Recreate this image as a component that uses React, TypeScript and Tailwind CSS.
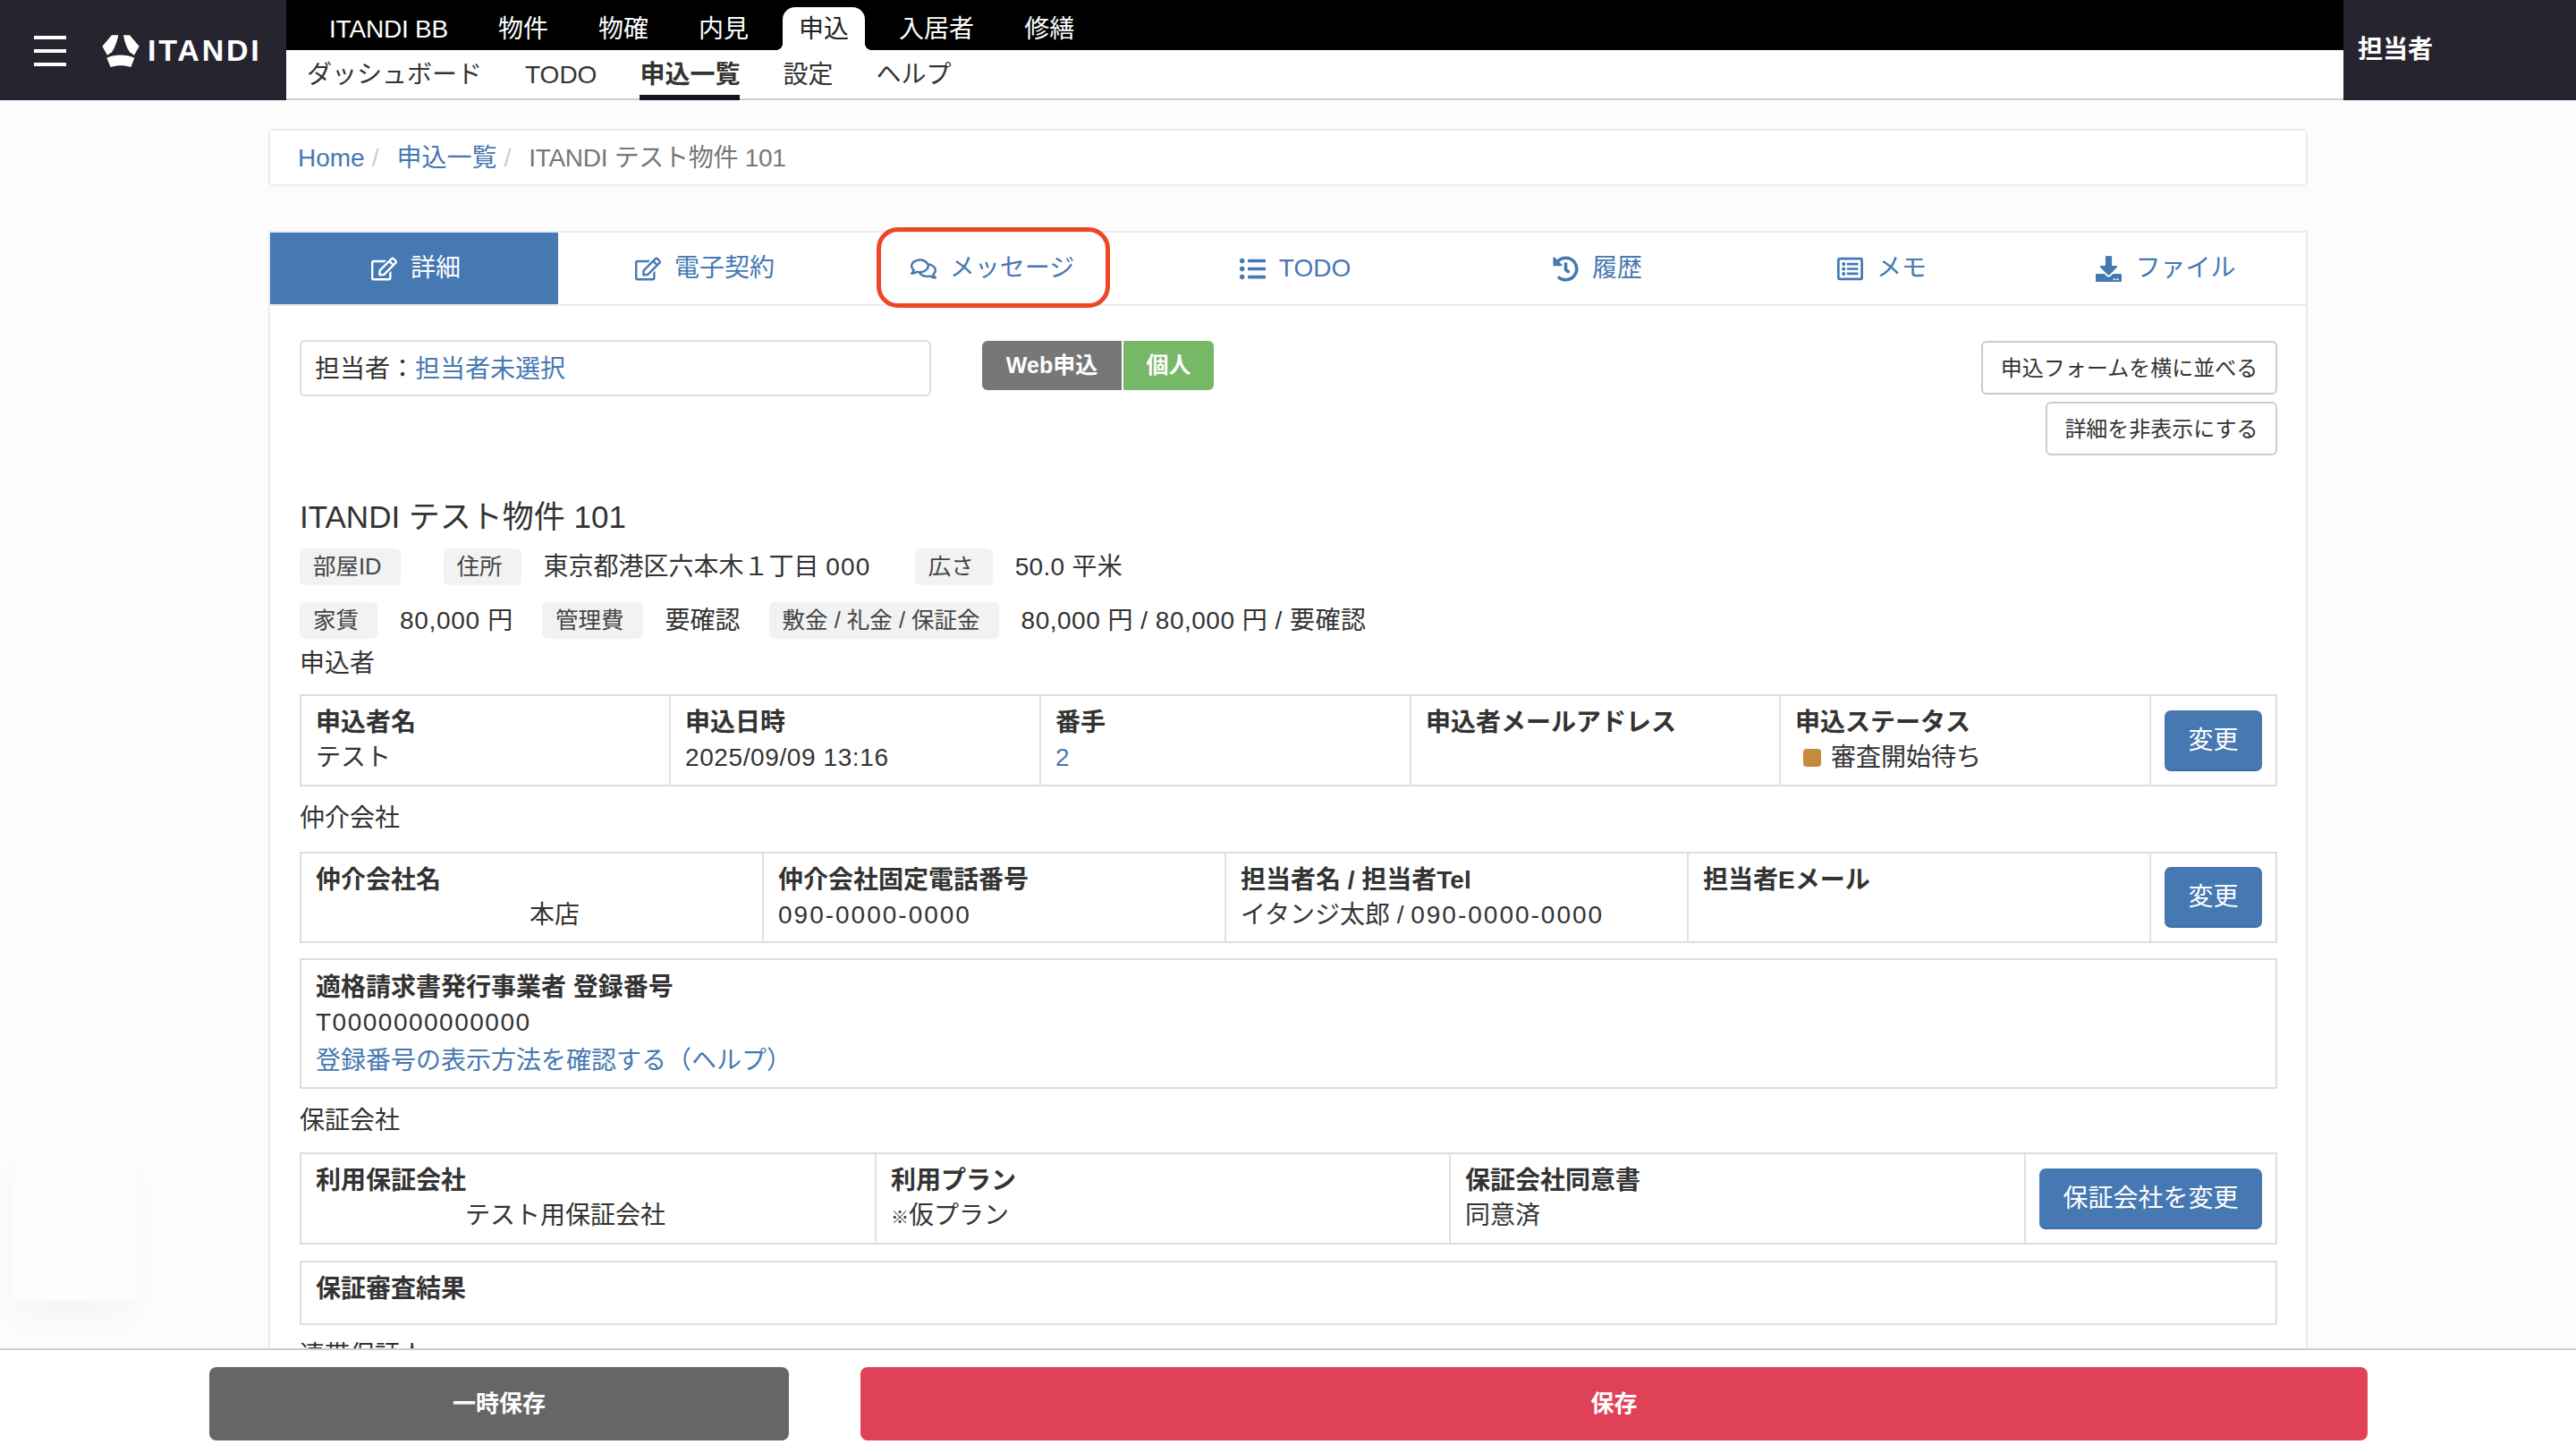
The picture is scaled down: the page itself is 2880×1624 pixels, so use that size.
import React from 'react';
import { FaRegEdit, FaRegComments, FaListUl, FaHistory, FaRegListAlt, FaDownload } from 'react-icons/fa';

const topNav = ['ITANDI BB', '物件', '物確', '内見', '申込', '入居者', '修繕'];
const subNav = ['ダッシュボード', 'TODO', '申込一覧', '設定', 'ヘルプ'];

const tabs = [
  { label: '詳細', Icon: FaRegEdit },
  { label: '電子契約', Icon: FaRegEdit },
  { label: 'メッセージ', Icon: FaRegComments },
  { label: 'TODO', Icon: FaListUl },
  { label: '履歴', Icon: FaHistory },
  { label: 'メモ', Icon: FaRegListAlt },
  { label: 'ファイル', Icon: FaDownload },
];

const Logo = () => (
  <svg viewBox="0 0 180 150" className="w-[60px] h-[50px] ml-[31px] shrink-0" fill="#fff">
    <path d="M60 25 L82 25 C78 45 70 68 60 82 L45 92 L28 62 Z" />
    <path d="M99 25 L120 25 L152 62 L135 92 L120 82 C110 68 102 45 99 25 Z" />
    <path d="M43 101 C70 88 108 88 136 101 L124 132 C100 125 80 125 56 132 Z" />
  </svg>
);

const Tag = ({ children }: { children: React.ReactNode }) => (
  <span className="h-[41px] pl-[15px] pr-[21px] rounded-[6px] bg-[#f2f2f2] text-[25.5px] leading-[41px] text-[#444] shrink-0">{children}</span>
);

const Cell = ({ label, children, className }: { label: string; children?: React.ReactNode; className: string }) => (
  <div className={className}>
    <div className="font-bold leading-[39px]">{label}</div>
    <div className="leading-[39px]">{children}</div>
  </div>
);

const ChangeButton = ({ children }: { children: React.ReactNode }) => (
  <button className="h-[68px] px-[26px] pt-[2px] rounded-[7px] bg-[#4678b2] border-b-2 border-[#3f6ca3] text-white text-[28px] whitespace-nowrap">{children}</button>
);

export default function App() {
  return (
    <div className="h-[1624px] w-[2880px] flex flex-col overflow-hidden bg-[#fcfcfc] text-[#333] text-[28px] font-['Liberation_Sans','Noto_Sans_CJK_JP',sans-serif]">
      {/* Header */}
      <header className="h-[112px] flex shrink-0">
        <div className="w-[320px] bg-[#26242e] flex items-center pl-[38px] text-white">
          <div className="w-[36px] flex flex-col gap-[11px] mt-[1px]">
            <div className="h-[4px] bg-white"></div>
            <div className="h-[4px] bg-white"></div>
            <div className="h-[4px] bg-white"></div>
          </div>
          <Logo />
          <span className="font-bold text-[34px] tracking-[2.8px] leading-none">ITANDI</span>
        </div>
        <div className="flex-1 flex flex-col">
          <nav className="h-[56px] bg-black flex items-end gap-[20px] pl-[30px] text-white">
            {topNav.map((item) => (
              <span
                key={item}
                className={
                  item === '申込'
                    ? "relative h-[48px] px-[18px] bg-white text-[#222] rounded-t-[14px] leading-[49px] before:content-[''] before:absolute before:left-[-8px] before:bottom-0 before:w-[8px] before:h-[8px] before:bg-[radial-gradient(circle_at_0_0,transparent_8px,white_8px)] after:content-[''] after:absolute after:right-[-8px] after:bottom-0 after:w-[8px] after:h-[8px] after:bg-[radial-gradient(circle_at_100%_0,transparent_8px,white_8px)]"
                    : item === 'ITANDI BB'
                      ? 'h-[48px] px-[18px] leading-[49px] tracking-[-0.2px]'
                      : 'h-[48px] px-[18px] leading-[49px]'
                }
              >
                {item}
              </span>
            ))}
          </nav>
          <nav className="h-[56px] bg-white border-b-2 border-[#ccc] flex gap-[48px] pl-[23px] text-[#333]">
            {subNav.map((item) => (
              <span
                key={item}
                className={item === '申込一覧' ? 'h-[56px] font-bold border-b-[6px] border-[#14121f] leading-[56px]' : 'leading-[56px]'}
              >
                {item}
              </span>
            ))}
          </nav>
        </div>
        <div className="w-[260px] bg-[#26242e] text-white font-bold pl-[16px] leading-[112px]">担当者</div>
      </header>

      {/* Main */}
      <main className="relative flex-1 overflow-hidden">
        <div className="absolute left-[14px] top-[1168px] w-[140px] h-[174px] bg-[#fcfcfc] shadow-[-4px_22px_40px_-8px_rgba(0,0,0,0.04)]"></div>

        <div className="relative ml-[300px] w-[2280px]">
          <div className="mt-[32px] h-[64px] pt-[2px] bg-white border-2 border-[#ebebf0] rounded-[6px] flex items-center pl-[31px] text-[#777]">
            <span className="text-[#4678b2]">Home</span>
            <span className="text-[#ccc] ml-[8px] mr-[20px]">/</span>
            <span className="text-[#4678b2]">申込一覧</span>
            <span className="text-[#ccc] ml-[8px] mr-[20px]">/</span>
            <span className="tracking-[-0.3px]">ITANDI テスト物件 101</span>
          </div>

          <section className="relative mt-[50px] bg-white border-x-2 border-t-2 border-[#ebebf0] pb-[40px]">
            {/* Tabs */}
            <div className="grid grid-cols-[322px_326px_317px_360px_316px_320px_1fr] h-[82px] border-b-2 border-[#ebebf0]">
              {tabs.map(({ label, Icon }, i) => (
                <div
                  key={label + i}
                  className={i === 0 ? 'h-[80px] pl-[4px] bg-[#4678b2] text-white flex items-center justify-center gap-[15px]' : 'h-[80px] pl-[2px] text-[#4678b2] flex items-center justify-center gap-[15px]'}
                >
                  <Icon size={29} />
                  <span>{label}</span>
                </div>
              ))}
            </div>
            <div className="absolute left-[678px] top-[-6px] w-[261px] h-[90px] border-[5px] border-[#ee4626] rounded-[24px]"></div>

            <div className="pl-[33px] pr-[32px]">
              <div className="flex items-start mt-[38px] h-[129px]">
                <div className="w-[706px] h-[63px] border-2 border-[#ddd] rounded-[6px] pl-[15px] leading-[61px]">
                  担当者：<span className="text-[#4678b2]">担当者未選択</span>
                </div>
                <div className="flex ml-[57px] mt-[1px] h-[55px] text-white font-bold text-[25px] leading-[55px]">
                  <span className="w-[156px] text-center bg-[#777] rounded-l-[6px]">Web申込</span>
                  <span className="w-[101px] ml-[2px] text-center bg-[#76b866] rounded-r-[6px]">個人</span>
                </div>
                <div className="ml-auto flex flex-col items-end gap-[8px] mt-[1px] text-[24px]">
                  <button className="w-[331px] h-[60px] pt-[1px] border-2 border-[#ccc] rounded-[6px] bg-white">申込フォームを横に並べる</button>
                  <button className="w-[259px] h-[60px] pt-[1px] border-2 border-[#ccc] rounded-[6px] bg-white">詳細を非表示にする</button>
                </div>
              </div>

              <h1 className="mt-[44px] text-[35px] leading-[50px]">ITANDI テスト物件 101</h1>

              <div className="flex items-center mt-[10px] h-[41px]">
                <Tag>部屋ID</Tag>
                <span className="w-[48px]"></span>
                <Tag>住所</Tag>
                <span className="ml-[25px] mr-[49px]">
                  東京都港区六本木１丁目 <span className="tracking-[1.2px]">000</span>
                </span>
                <Tag>広さ</Tag>
                <span className="ml-[25px] tracking-[0.3px]">50.0 平米</span>
              </div>
              <div className="flex items-center mt-[19px] h-[41px]">
                <Tag>家賃</Tag>
                <span className="ml-[25px] mr-[32px] tracking-[0.7px]">80,000 円</span>
                <Tag>管理費</Tag>
                <span className="ml-[25px] mr-[32px]">要確認</span>
                <Tag>敷金 / 礼金 / 保証金</Tag>
                <span className="ml-[25px] tracking-[0.5px]">80,000 円 / 80,000 円 / 要確認</span>
              </div>

              <div className="mt-[8px] leading-[40px]">申込者</div>
              <div className="mt-[14px] h-[103px] border-2 border-[#ddd] flex">
                <Cell label="申込者名" className="w-[413px] pl-[16px] pt-[10px] border-r-2 border-[#e2e2e2]">テスト</Cell>
                <Cell label="申込日時" className="w-[414px] pl-[16px] pt-[10px] border-r-2 border-[#e2e2e2]">
                  <span className="tracking-[0.6px]">2025/09/09 13:16</span>
                </Cell>
                <Cell label="番手" className="w-[414px] pl-[16px] pt-[10px] border-r-2 border-[#e2e2e2]">
                  <span className="text-[#4678b2]">2</span>
                </Cell>
                <Cell label="申込者メールアドレス" className="w-[413px] pl-[16px] pt-[10px] border-r-2 border-[#e2e2e2]" />
                <Cell label="申込ステータス" className="w-[414px] pl-[16px] pt-[10px] border-r-2 border-[#e2e2e2]">
                  <span className="flex items-center">
                    <span className="w-[20px] h-[20px] ml-[9px] mr-[11px] rounded-[4px] bg-[#c48a3e]"></span>
                    審査開始待ち
                  </span>
                </Cell>
                <div className="flex-1 flex justify-center pt-[16px]">
                  <ChangeButton>変更</ChangeButton>
                </div>
              </div>

              <div className="mt-[16px] leading-[40px]">仲介会社</div>
              <div className="mt-[17px] h-[102px] border-2 border-[#ddd] flex">
                <Cell label="仲介会社名" className="w-[517px] pl-[16px] pt-[10px] border-r-2 border-[#e2e2e2]">
                  <span className="ml-[239px]">本店</span>
                </Cell>
                <Cell label="仲介会社固定電話番号" className="w-[517px] pl-[16px] pt-[10px] border-r-2 border-[#e2e2e2]">
                  <span className="tracking-[2px]">090-0000-0000</span>
                </Cell>
                <Cell label="担当者名 / 担当者Tel" className="w-[517px] pl-[16px] pt-[10px] border-r-2 border-[#e2e2e2]">
                  イタンジ太郎 / <span className="tracking-[2px]">090-0000-0000</span>
                </Cell>
                <Cell label="担当者Eメール" className="w-[517px] pl-[16px] pt-[10px] border-r-2 border-[#e2e2e2]" />
                <div className="flex-1 flex justify-center pt-[15px]">
                  <ChangeButton>変更</ChangeButton>
                </div>
              </div>

              <div className="mt-[17px] h-[146px] border-2 border-[#ddd] pl-[16px] pt-[11px]">
                <div className="font-bold leading-[39px]">適格請求書発行事業者 登録番号</div>
                <div className="leading-[39px] tracking-[1.5px]">T0000000000000</div>
                <div className="text-[#4678b2] leading-[48px]">登録番号の表示方法を確認する（ヘルプ）</div>
              </div>

              <div className="mt-[16px] leading-[40px]">保証会社</div>
              <div className="mt-[15px] h-[103px] border-2 border-[#ddd] flex">
                <Cell label="利用保証会社" className="w-[643px] pl-[16px] pt-[10px] border-r-2 border-[#e2e2e2]">
                  <span className="ml-[167px]">テスト用保証会社</span>
                </Cell>
                <Cell label="利用プラン" className="w-[642px] pl-[16px] pt-[10px] border-r-2 border-[#e2e2e2]">
                  <span className="text-[20px]">※</span>仮プラン
                </Cell>
                <Cell label="保証会社同意書" className="w-[643px] pl-[16px] pt-[10px] border-r-2 border-[#e2e2e2]">同意済</Cell>
                <div className="flex-1 flex justify-center pt-[16px]">
                  <ChangeButton>保証会社を変更</ChangeButton>
                </div>
              </div>

              <div className="mt-[18px] h-[72px] border-2 border-[#ddd] pl-[16px] pt-[10px] font-bold leading-[39px]">保証審査結果</div>

              <div className="mt-[14px] leading-[40px]">連帯保証人</div>
            </div>
          </section>
        </div>
      </main>

      {/* Footer */}
      <footer className="relative h-[117px] shrink-0 bg-white border-t-2 border-[#ccc] flex pl-[234px] pt-[19px] gap-[80px] text-white font-bold text-[26px]">
        <button className="w-[648px] h-[82px] rounded-[8px] bg-[#666]">一時保存</button>
        <button className="w-[1685px] h-[82px] rounded-[8px] bg-[#df4257]">保存</button>
      </footer>
    </div>
  );
}
